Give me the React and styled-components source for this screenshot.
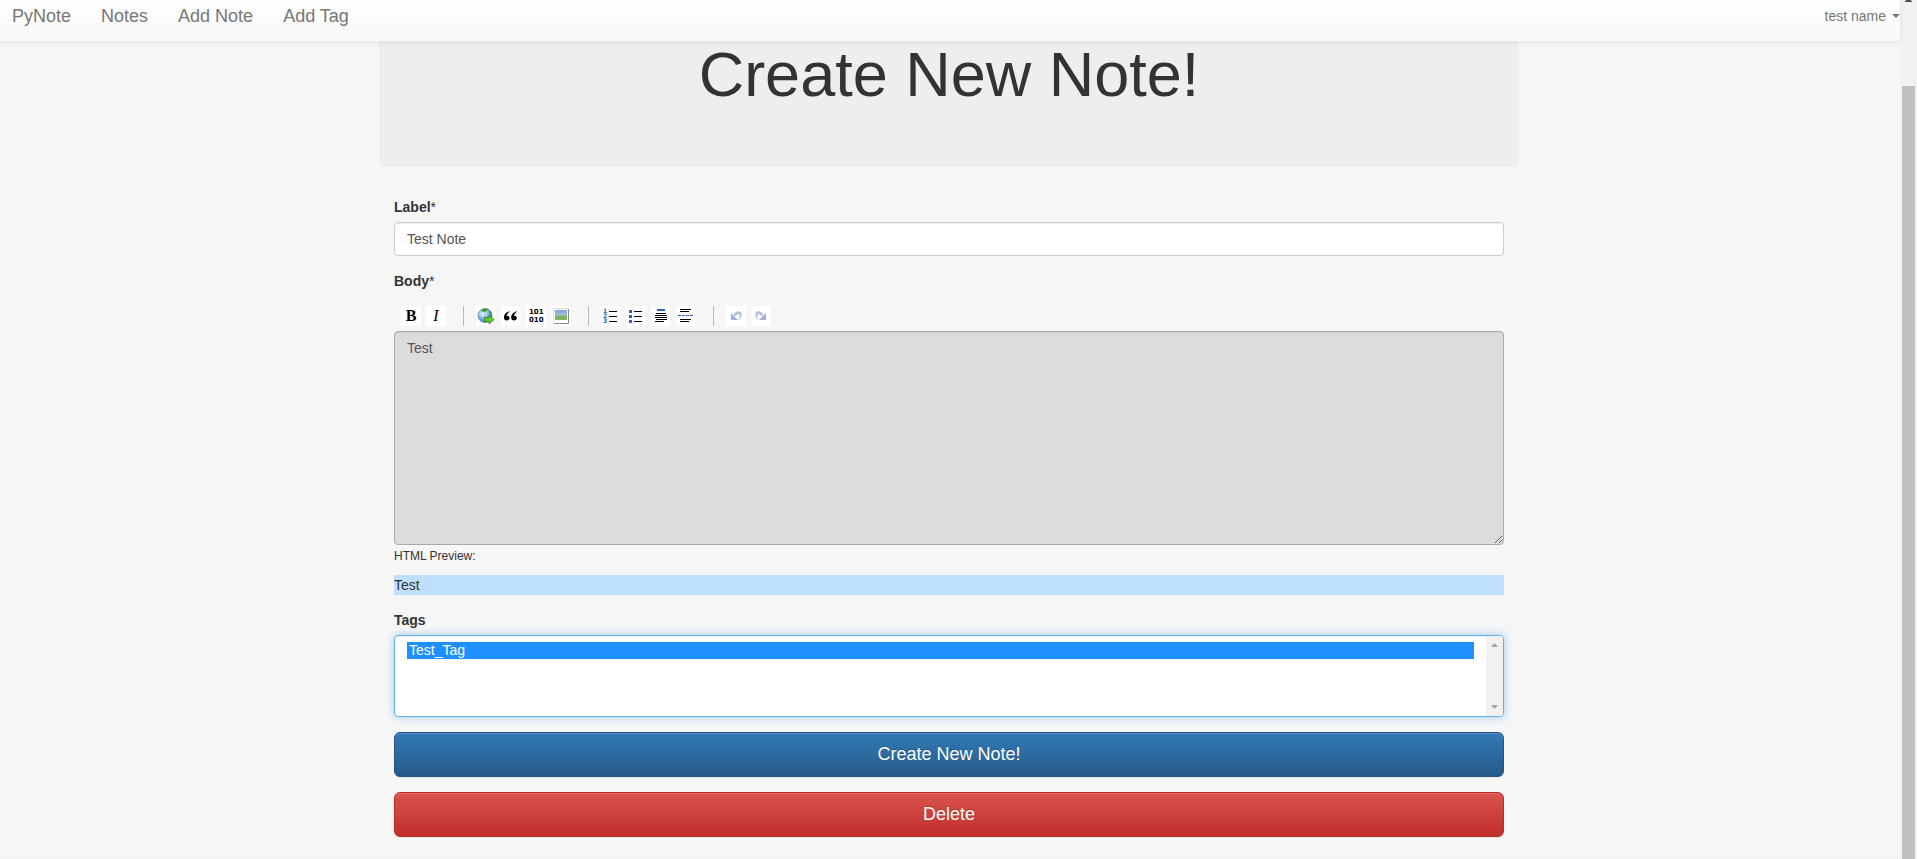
import React from "react";
import styled, { createGlobalStyle, css } from "styled-components";

const GlobalStyle = createGlobalStyle`
  *, *::before, *::after { box-sizing: border-box; }
  body {
    margin: 0;
    background: #f6f6f6;
    color: #333;
    font: 14px/20px "Liberation Sans", Arial, sans-serif;
  }
`;

const Page = styled.div`
  display: flex;
  min-height: 100vh;
`;

const Content = styled.div`
  flex: 1;
  min-width: 0;
`;

const NavBar = styled.nav`
  position: relative;
  z-index: 1;
  display: flex;
  align-items: flex-start;
  height: 42px;
  padding: 6px 0 0 12px;
  background: linear-gradient(#fff, #f8f8f8);
  border-bottom: 1px solid #e7e7e7;
  box-shadow: 0 1px 5px rgba(0, 0, 0, 0.075);
`;

const NavLinks = styled.div`
  display: flex;
  flex: 1;
  gap: 30px;
`;

const NavLink = styled.a`
  color: #777;
  font-size: 18px;
  line-height: 20px;
  text-decoration: none;
`;

const UserMenu = styled.button`
  display: flex;
  align-items: center;
  gap: 6px;
  padding: 0;
  border: 0;
  background: none;
  color: #777;
  font: inherit;
`;

const Caret = styled.span`
  border: 4px solid transparent;
  border-top-color: currentColor;
  border-bottom: 0;
`;

const Container = styled.main`
  max-width: 1142px;
  margin: 0 auto;
  padding-right: 2px;
`;

const Jumbotron = styled.header`
  padding-bottom: 61px;
  background: #eee;
  border-radius: 0 0 6px 6px;
  text-align: center;
`;

const Title = styled.h1`
  margin: 0;
  font-size: 63px;
  line-height: 64px;
  font-weight: 500;
`;

const Form = styled.form`
  display: flex;
  flex-direction: column;
  gap: 15px;
  padding: 30px 15px 20px;
`;

const Field = styled.div`
  display: flex;
  flex-direction: column;
  gap: 5px;
`;

const FieldLabel = styled.label`
  align-self: flex-start;
  font-weight: 700;
`;

const Required = styled.span`
  font-weight: 400;
`;

const control = css`
  display: block;
  width: 100%;
  margin: 0;
  padding: 6px 12px;
  border: 1px solid #ccc;
  border-radius: 4px;
  background: #fff;
  box-shadow: inset 0 1px 1px rgba(0, 0, 0, 0.075);
  color: #555;
  font: inherit;
`;

const TextInput = styled.input`
  ${control}
  height: 34px;
`;

const BodyText = styled.textarea`
  ${control}
  height: 214px;
  background: #dcdcdc;
  border-color: #a9a9a9;
  resize: both;
`;

const Toolbar = styled.div`
  display: flex;
  gap: 5px;
  padding: 10px 7px 0;
`;

const Tool = styled.button`
  width: 20px;
  height: 20px;
  padding: 0;
  border: 0;
  background: #fff;
  color: #000;
  font: ${(p) => p.$font || "inherit"};
  text-align: center;

  svg { display: block; }
`;

const Separator = styled.span`
  width: 1px;
  height: 20px;
  margin: 0 7px 0 12px;
  background: #bbb;
`;

const PreviewCaption = styled.div`
  padding-bottom: 8px;
  font-size: 12px;
  line-height: 22px;
`;

const PreviewBody = styled.div`
  background: #bfdfff;
`;

const ListFrame = styled.div`
  display: flex;
  height: 82px;
  overflow: hidden;
  border: 1px solid #66afe9;
  border-radius: 4px;
  background: #fff;
  box-shadow: inset 0 1px 1px rgba(0, 0, 0, 0.075), 0 0 8px rgba(102, 175, 233, 0.6);
`;

const TagList = styled.select`
  flex: 1;
  min-width: 0;
  padding: 6px 12px;
  border: 0;
  outline: 0;
  background: transparent;
  font: inherit;
  overflow: hidden;
  scrollbar-width: none;

  option {
    min-height: 17px;
    padding: 0 2px 1px;
    line-height: 16px;
  }
  option:checked {
    background: linear-gradient(#1e90ff, #1e90ff) !important;
    color: #fff !important;
  }
`;

const ListScroll = styled.div`
  display: flex;
  flex-direction: column;
  justify-content: space-between;
  align-items: center;
  width: 17px;
  padding: 7px 0;
  background: #f1f1f1;
  color: #a3a3a3;
`;

const Arrow = styled.svg`
  display: block;
  width: 7px;
  height: 4px;
  fill: currentColor;
`;

const WideButton = styled.button`
  width: 100%;
  height: 45px;
  padding: 10px 16px;
  border: 1px solid ${(p) => p.$border};
  border-radius: 6px;
  background: linear-gradient(${(p) => p.$from}, ${(p) => p.$to});
  box-shadow: inset 0 1px 0 rgba(255, 255, 255, 0.15), 0 1px 1px rgba(0, 0, 0, 0.075);
  color: #fff;
  font: inherit;
  font-size: 18px;
  line-height: 23px;
  text-shadow: 0 -1px 0 rgba(0, 0, 0, 0.2);
`;

const Rule = styled.hr`
  margin: 0;
  border: 0;
  border-top: 1px solid #eee;
`;

const PageScroll = styled.div`
  display: flex;
  flex-direction: column;
  align-items: center;
  gap: 82px;
  width: 17px;
  background: #f1f1f1;
  color: #505050;
`;

const ScrollThumb = styled.div`
  flex: 1;
  width: 13px;
  background: #c1c1c1;
`;

const Icon = ({ children }) => (
  <svg width="20" height="20" viewBox="0 0 20 20" aria-hidden="true">
    {children}
  </svg>
);

const LinkIcon = () => (
  <Icon>
    <defs>
      <radialGradient id="sea" cx="35%" cy="35%" r="75%">
        <stop offset="0" stopColor="#e3f1fc" />
        <stop offset=".5" stopColor="#86b9e4" />
        <stop offset="1" stopColor="#2c68a8" />
      </radialGradient>
    </defs>
    <circle cx="9" cy="9.500" r="7" fill="url(#sea)" stroke="#4778a5" strokeWidth=".7" />
    <path d="M5 4.500 8 2.800l4.500.2-1 1.500-2 .5-1 1.500-2-1ZM13 4.500l2 2 .5 2.500-2-1.500Z" fill="#3fa028" />
    <path d="M3 11l3 2 1 3-3-2Z" fill="#5c9dce" />
    <path d="M8.500 11.500h4.500V9l5 4.500-5 4.500v-2.500H8.500Z" fill="#5fce30" stroke="#267a12" strokeWidth=".8" />
  </Icon>
);

const QuoteIcon = () => (
  <Icon>
    <path
      d="M8.500 5.200C5.200 6 2.900 8.500 2.900 11.500c0 1.800 1.200 3 2.800 3 1.600 0 2.800-1 2.800-2.500 0-1.400-1-2.300-2.300-2.300h-.6c.4-1.700 1.400-3 3.100-4ZM15.800 5.200c-3.300.8-5.600 3.300-5.600 6.300 0 1.800 1.200 3 2.800 3 1.600 0 2.800-1 2.800-2.500 0-1.400-1-2.300-2.300-2.300h-.6c.4-1.700 1.400-3 3.100-4Z"
    />
  </Icon>
);

const CodeIcon = () => (
  <Icon>
    <g fontFamily="DejaVu Sans, sans-serif" fontWeight="700" fontSize="7">
      <text x="3" y="8">101</text>
      <text x="3" y="16">010</text>
    </g>
  </Icon>
);

const ImageIcon = () => (
  <Icon>
    <defs>
      <linearGradient id="scene" x2="0" y2="1">
        <stop offset="0" stopColor="#7b9fdc" />
        <stop offset=".5" stopColor="#a5c3df" />
        <stop offset=".6" stopColor="#7bb35c" />
        <stop offset="1" stopColor="#86b46e" />
      </linearGradient>
    </defs>
    <path d="M3 17.500h14.500V3" fill="none" stroke="#888" />
    <path d="M2.500 17V2.500H17" fill="none" stroke="#ddd" />
    <path fill="url(#scene)" d="M4 4h12v10H4z" />
  </Icon>
);

const NumberedIcon = () => (
  <Icon>
    <g fill="#2b5bb8" fontFamily="DejaVu Sans, sans-serif" fontWeight="700" fontSize="6">
      <text x="2" y="7">1</text>
      <text x="2" y="12">2</text>
      <text x="2" y="17">3</text>
    </g>
    <path d="M8 5h8v1H8zM8 10h8v1H8zM8 15h8v1H8z" />
  </Icon>
);

const BulletIcon = () => (
  <Icon>
    <path fill="#335fb9" d="M3 4h3v3H3zM3 9h3v3H3zM3 14h3v3H3z" />
    <path d="M8 5h8v1H8zM8 10h8v1H8zM8 15h8v1H8z" />
  </Icon>
);

const HeadingIcon = () => (
  <Icon>
    <path fill="#335fb9" d="M6 3h8v2H6z" />
    <path d="M5 7h10v1H5zM4 9h12v1H4zM4 11h12v1H4zM5 13h11v1H5zM4 15h9v1H4z" />
  </Icon>
);

const RuleIcon = () => (
  <Icon>
    <path d="M4 3h11v1H4zM4 5h9v1H4zM4 13h11v1H4zM4 15h9v1H4z" />
    <path fill="#335fb9" d="M2 9h3v1H2zM6 9h3v1H6zM10 9h3v1h-3zM14 9h3v1h-3z" />
  </Icon>
);

const UndoIcon = ({ flip }) => (
  <Icon>
    <g transform={flip ? "matrix(-1 0 0 1 20 0)" : undefined}>
      <path
        d="M7.500 9C9 5.500 12 4.500 14 5.500c2.500 1.500 2 5.500-1 9 1-3.500 1-5.500-.5-6.200-1.200-.5-2.200.2-3 2Z"
        fill="#b0bfdc"
      />
      <path d="M5 7v7h7Z" fill="#9fb1d4" />
    </g>
  </Icon>
);

const toolGroups = [
  [
    { name: "Bold", glyph: "B", font: '700 16px/20px "Liberation Serif", serif' },
    { name: "Italic", glyph: "I", font: 'italic 400 16px/20px "Liberation Serif", serif' },
  ],
  [
    { name: "Hyperlink", glyph: <LinkIcon /> },
    { name: "Blockquote", glyph: <QuoteIcon /> },
    { name: "Code sample", glyph: <CodeIcon /> },
    { name: "Image", glyph: <ImageIcon /> },
  ],
  [
    { name: "Numbered list", glyph: <NumberedIcon /> },
    { name: "Bulleted list", glyph: <BulletIcon /> },
    { name: "Heading", glyph: <HeadingIcon /> },
    { name: "Horizontal rule", glyph: <RuleIcon /> },
  ],
  [
    { name: "Undo", glyph: <UndoIcon /> },
    { name: "Redo", glyph: <UndoIcon flip /> },
  ],
];

export default function App() {
  return (
    <Page>
      <GlobalStyle />
      <Content>
        <NavBar>
          <NavLinks>
            <NavLink href="#home">PyNote</NavLink>
            <NavLink href="#notes">Notes</NavLink>
            <NavLink href="#add-note">Add Note</NavLink>
            <NavLink href="#add-tag">Add Tag</NavLink>
          </NavLinks>
          <UserMenu type="button">
            test name
            <Caret />
          </UserMenu>
        </NavBar>
        <Container>
          <Jumbotron>
            <Title>Create New Note!</Title>
          </Jumbotron>
          <Form onSubmit={(e) => e.preventDefault()}>
            <Field>
              <FieldLabel htmlFor="label">
                Label<Required>*</Required>
              </FieldLabel>
              <TextInput id="label" type="text" defaultValue="Test Note" />
            </Field>
            <div>
              <Field>
                <FieldLabel htmlFor="body">
                  Body<Required>*</Required>
                </FieldLabel>
                <Toolbar role="toolbar">
                  {toolGroups.map((group, i) => (
                    <React.Fragment key={i}>
                      {i > 0 && <Separator />}
                      {group.map((tool) => (
                        <Tool key={tool.name} type="button" aria-label={tool.name} $font={tool.font}>
                          {tool.glyph}
                        </Tool>
                      ))}
                    </React.Fragment>
                  ))}
                </Toolbar>
                <BodyText id="body" defaultValue="Test" />
              </Field>
              <PreviewCaption>HTML Preview:</PreviewCaption>
              <PreviewBody>Test</PreviewBody>
            </div>
            <Field>
              <FieldLabel htmlFor="tags">Tags</FieldLabel>
              <ListFrame>
                <TagList id="tags" multiple size={4} defaultValue={["test"]}>
                  <option value="test">Test_Tag</option>
                </TagList>
                <ListScroll aria-hidden="true">
                  <Arrow viewBox="0 0 7 4"><path d="M0 4h7L3.500 0Z" /></Arrow>
                  <Arrow viewBox="0 0 7 4"><path d="M0 0h7L3.500 4Z" /></Arrow>
                </ListScroll>
              </ListFrame>
            </Field>
            <WideButton type="submit" $from="#337ab7" $to="#265a88" $border="#245580">
              Create New Note!
            </WideButton>
            <WideButton type="button" $from="#d9534f" $to="#c12e2a" $border="#b92c28">
              Delete
            </WideButton>
          </Form>
        </Container>
        <Rule />
      </Content>
      <PageScroll aria-hidden="true">
        <Arrow viewBox="0 0 7 4"><path d="M1 0h5v1h1v1H0V1h1Z" /></Arrow>
        <ScrollThumb />
      </PageScroll>
    </Page>
  );
}
